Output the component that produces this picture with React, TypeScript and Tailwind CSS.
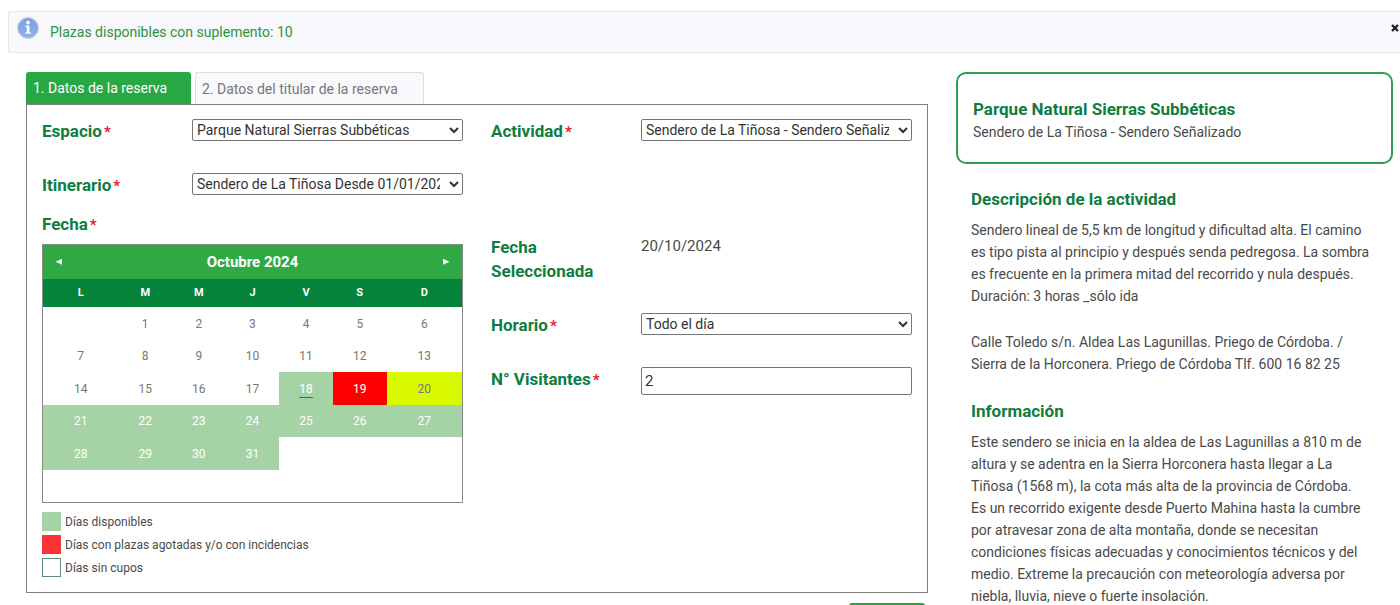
import { useState, type ReactNode } from 'react';
import clsx from 'clsx';

type DayStatus = 'none' | 'available' | 'soldOut' | 'selected';

interface Day {
  day: number;
  status: DayStatus;
}

const WEEKDAYS = ['L', 'M', 'M', 'J', 'V', 'S', 'D'];

// October 2024 starts on a Tuesday
const FIRST_OFFSET = 1;
const DAYS_IN_MONTH = 31;
const TODAY = 18;

function statusOf(day: number): DayStatus {
  if (day < 18) return 'none';
  if (day === 19) return 'soldOut';
  if (day === 20) return 'selected';
  return 'available';
}

function buildWeeks(): (Day | null)[][] {
  return Array.from({ length: 6 }, (_, week) =>
    Array.from({ length: 7 }, (_, col) => {
      const day = week * 7 + col + 1 - FIRST_OFFSET;
      if (day < 1 || day > DAYS_IN_MONTH) return null;
      return { day, status: statusOf(day) };
    })
  );
}

const cellStyles: Record<DayStatus, string> = {
  none: 'text-[#777]',
  available: 'bg-[#a6d3a6] text-white',
  soldOut: 'bg-[#ff0000] text-white',
  selected: 'bg-[#d9f900] text-[#777]',
};

const legend = [
  { label: 'Días disponibles', swatch: 'bg-[#a6d3a6]' },
  { label: 'Días con plazas agotadas y/o con incidencias', swatch: 'bg-[#fa3434]' },
  { label: 'Días sin cupos', swatch: 'border border-[#5d8f6f] bg-white' },
];

const labelClass = 'text-[17px] leading-6 font-bold text-[#0f7d3f]';

function Required() {
  return <span className="ml-0.5 text-[15px] leading-5 text-[#e3202b]">*</span>;
}

function Field({ id, label, required = true, children }: {
  id: string;
  label: string;
  required?: boolean;
  children: ReactNode;
}) {
  return (
    <div className="grid grid-cols-[150px_minmax(0,1fr)] items-start">
      <label htmlFor={id} className={clsx(labelClass, 'pr-8')}>
        {label}
        {required && <Required />}
      </label>
      {children}
    </div>
  );
}

function SelectField({ id, label, options }: { id: string; label: string; options: string[] }) {
  return (
    <Field id={id} label={label}>
      <select
        id={id}
        className="h-[22px] w-full rounded-[2px] border border-[#767676] bg-white pr-1.5 text-sm leading-5 text-[#333]"
      >
        {options.map((option) => (
          <option key={option}>{option}</option>
        ))}
      </select>
    </Field>
  );
}

function Calendar() {
  return (
    <div className="border border-[#8a8a8a]">
      <div className="flex h-[34px] items-center justify-between bg-[#2fa944] px-3 text-white">
        <button type="button" aria-label="Mes anterior">
          <svg className="h-2 w-2" viewBox="0 0 8 8" fill="currentColor">
            <path d="M7 .8v6L.6 3.8z" />
          </svg>
        </button>
        <span className="text-[15px] font-bold">Octubre 2024</span>
        <button type="button" aria-label="Mes siguiente">
          <svg className="h-2 w-2" viewBox="0 0 8 8" fill="currentColor">
            <path d="M1 .8v6l6.4-3z" />
          </svg>
        </button>
      </div>
      <table className="w-full table-fixed border-collapse text-center">
        <thead>
          <tr className="h-7 bg-[#05833b] text-[11px] text-white">
            {WEEKDAYS.map((name, i) => (
              <th key={i} scope="col" className="font-bold first:w-[18%] last:w-[18%]">
                {name}
              </th>
            ))}
          </tr>
        </thead>
        <tbody className="text-xs">
          {buildWeeks().map((week, i) => (
            <tr key={i} className="h-[33px] even:h-8">
              {week.map((cell, j) => (
                <td key={j} className={clsx('p-0', cell && cellStyles[cell.status])}>
                  {cell && (
                    <span
                      className={clsx(
                        cell.day === TODAY && 'underline decoration-[#e3202b] underline-offset-4'
                      )}
                    >
                      {cell.day}
                    </span>
                  )}
                </td>
              ))}
            </tr>
          ))}
        </tbody>
      </table>
    </div>
  );
}

function Notice({ onClose }: { onClose: () => void }) {
  return (
    <div className="ml-2 flex h-[42px] items-center rounded-l-[3px] border border-r-0 border-[#e9e6ec] bg-[#f8f7fc] pr-px pl-2" role="status">
      <svg className="mb-2 h-[22px] w-[22px]" viewBox="0 0 22 22">
        <defs>
          <linearGradient id="info" x1="0" y1="0" x2="0" y2="1">
            <stop offset="0" stopColor="#7f9fdc" />
            <stop offset="1" stopColor="#8db4f0" />
          </linearGradient>
        </defs>
        <circle cx="11" cy="11" r="10.4" fill="url(#info)" stroke="#c3cfe6" />
        <circle cx="11" cy="5.6" r="1.8" fill="#fff" />
        <path d="M8.6 8.6h3.8v6.6h1.3v1.6H8.6v-1.6h1.2v-5H8.6z" fill="#fff" />
      </svg>
      <p className="ml-[11px] flex-1 text-sm text-[#2a9440]">
        Plazas disponibles con suplemento: 10
      </p>
      <button type="button" aria-label="Cerrar" onClick={onClose} className="mb-2">
        <svg className="h-2 w-2" viewBox="0 0 8 8" fill="none" stroke="#222" strokeWidth="2.4">
          <path d="M1 1l6 6M7 1L1 7" />
        </svg>
      </button>
    </div>
  );
}

export default function App() {
  const [showNotice, setShowNotice] = useState(true);
  const [visitors, setVisitors] = useState('2');

  return (
    <div className="min-h-screen bg-white pt-[11px] font-[Roboto,'Liberation_Sans',sans-serif] text-[#4a4a4a]">
      {showNotice && <Notice onClose={() => setShowNotice(false)} />}

      <div className="flex items-start gap-7 pt-[19px] pr-[7px] pl-[26px]">
        <main className="min-w-0 flex-1">
          <div className="flex gap-1 text-sm" role="tablist">
            <button
              type="button"
              role="tab"
              aria-selected="true"
              className="h-8 w-[165px] rounded-t-[3px] bg-[#28a745] pl-[7px] text-left text-white"
            >
              1. Datos de la reserva
            </button>
            <button
              type="button"
              role="tab"
              aria-selected="false"
              className="h-8 w-[229px] rounded-t-[3px] border border-b-0 border-[#dcdce2] bg-[#f8f8fd] pl-[6px] text-left text-[#777]"
            >
              2. Datos del titular de la reserva
            </button>
          </div>

          <form className="grid grid-cols-2 gap-x-7 border border-[#808080] px-[15px] pt-[14px] pb-[15px]">
            <SelectField id="espacio" label="Espacio" options={['Parque Natural Sierras Subbéticas']} />
            <SelectField id="actividad" label="Actividad" options={['Sendero de La Tiñosa - Sendero Señalizado']} />

            <div className="col-span-2 mt-[30px] grid grid-cols-2 gap-x-7">
              <SelectField
                id="itinerario"
                label="Itinerario"
                options={['Sendero de La Tiñosa Desde 01/01/2024 Hasta 31/12/2024']}
              />
            </div>

            <div className="mt-[15px]">
              <p className={clsx(labelClass, 'mb-2')}>
                Fecha
                <Required />
              </p>
              <Calendar />
              <ul className="mt-[9px] flex flex-col gap-1 text-xs">
                {legend.map(({ label, swatch }) => (
                  <li key={label} className="flex items-center gap-1">
                    <span className={clsx('h-[19px] w-[19px]', swatch)} />
                    {label}
                  </li>
                ))}
              </ul>
            </div>

            <div className="mt-[38px] flex flex-col gap-[30px]">
              <Field id="seleccionada" label="Fecha Seleccionada" required={false}>
                <output id="seleccionada" className="text-[15px] leading-[22px]">20/10/2024</output>
              </Field>
              <SelectField id="horario" label="Horario" options={['Todo el día']} />
              <Field id="visitantes" label="N° Visitantes">
                <input
                  id="visitantes"
                  type="text"
                  inputMode="numeric"
                  value={visitors}
                  onChange={(e) => setVisitors(e.target.value)}
                  className="h-7 w-full rounded-[2px] border border-[#767676] px-[3px] text-[15px] text-[#333]"
                />
              </Field>
            </div>
          </form>

          <div className="mt-[10px] flex justify-end pr-[3px]">
            <button type="button" aria-label="Siguiente" className="h-8 w-[76px] rounded-[3px] bg-[#28a745]" />
          </div>
        </main>

        <aside className="w-[437px] shrink-0 text-sm leading-[22px]">
          <header className="rounded-[10px] border-2 border-[#2f9e4f] px-[15px] pt-[23px] pb-[19px]">
            <h2 className={labelClass}>Parque Natural Sierras Subbéticas</h2>
            <p className="leading-[22px]">Sendero de La Tiñosa - Sendero Señalizado</p>
          </header>

          <section className="mt-[23px] pl-[15px]">
            <h3 className={clsx(labelClass, 'mb-2')}>Descripción de la actividad</h3>
            <p className="leading-[22px]">
              Sendero lineal de 5,5 km de longitud y dificultad alta. El camino
              <br />
              es tipo pista al principio y después senda pedregosa. La sombra
              <br />
              es frecuente en la primera mitad del recorrido y nula después.
              <br />
              Duración: 3 horas _sólo ida
            </p>
            <p className="mt-6 leading-[22px]">
              Calle Toledo s/n. Aldea Las Lagunillas. Priego de Córdoba. /
              <br />
              Sierra de la Horconera. Priego de Córdoba Tlf. 600 16 82 25
            </p>
          </section>

          <section className="mt-6 pl-[15px]">
            <h3 className={clsx(labelClass, 'mb-2')}>Información</h3>
            <p className="leading-[22px]">
              Este sendero se inicia en la aldea de Las Lagunillas a 810 m de
              <br />
              altura y se adentra en la Sierra Horconera hasta llegar a La
              <br />
              Tiñosa (1568 m), la cota más alta de la provincia de Córdoba.
              <br />
              Es un recorrido exigente desde Puerto Mahina hasta la cumbre
              <br />
              por atravesar zona de alta montaña, donde se necesitan
              <br />
              condiciones físicas adecuadas y conocimientos técnicos y del
              <br />
              medio. Extreme la precaución con meteorología adversa por
              <br />
              niebla, lluvia, nieve o fuerte insolación.
            </p>
          </section>
        </aside>
      </div>
    </div>
  );
}
